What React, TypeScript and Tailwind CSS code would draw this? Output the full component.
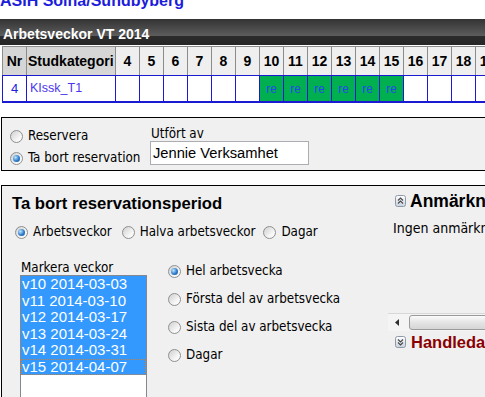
import React from "react";

const weeks = [4, 5, 6, 7, 8, 9, 10, 11, 12, 13, 14, 15, 16, 17, 18, 19, 20];
const booked = new Set([10, 11, 12, 13, 14, 15]);
const listRows = [
  "v10 2014-03-03",
  "v11 2014-03-10",
  "v12 2014-03-17",
  "v13 2014-03-24",
  "v14 2014-03-31",
  "v15 2014-04-07",
];

function Radio({ checked }: { checked?: boolean }) {
  return (
    <span className="flex h-[13px] w-[13px] shrink-0 items-center justify-center rounded-full border border-[#8e8f8f] bg-[linear-gradient(135deg,#cfcfcf,#f8f8f8_70%)]">
      {checked && (
        <span className="h-[7px] w-[7px] rounded-full bg-[radial-gradient(circle_at_35%_35%,#bfe6ff,#2d7ccc_55%,#0e4687)]" />
      )}
    </span>
  );
}

function ChevIcon({ up }: { up?: boolean }) {
  return (
    <svg width="11" height="12" viewBox="0 0 11 12" className="shrink-0">
      <defs>
        <linearGradient id={up ? "gu" : "gd"} x1="0" y1="0" x2="0" y2="1">
          <stop offset="0" stopColor="#ffffff" />
          <stop offset="1" stopColor="#c9d2de" />
        </linearGradient>
      </defs>
      <rect x="0.5" y="0.5" width="10" height="11" rx="2" fill={`url(#${up ? "gu" : "gd"})`} stroke="#8d99a8" />
      {up ? (
        <path d="M3 5.5 L5.5 3 L8 5.5 M3 8.5 L5.5 6 L8 8.5" fill="none" stroke="#4a4a4a" strokeWidth="1.2" />
      ) : (
        <path d="M3 3.5 L5.5 6 L8 3.5 M3 6.5 L5.5 9 L8 6.5" fill="none" stroke="#4a4a4a" strokeWidth="1.2" />
      )}
    </svg>
  );
}

export default function App() {
  return (
    <div className="relative h-[397px] w-[485px] overflow-hidden bg-white font-['DejaVu_Sans_Condensed','Liberation_Sans',sans-serif] text-[13.3px] text-black">
      {/* site title */}
      <div className="flex h-[19px] flex-col">
        <div className="-mt-[8px] whitespace-nowrap font-['Liberation_Sans',sans-serif] text-[16px] font-bold leading-[18px] text-[#1c1cdc]">
          ASIH Solna/Sundbyberg
        </div>
      </div>

      {/* dark bar */}
      <div className="h-[26px] w-[520px] bg-[linear-gradient(#333333,#5c5c5c_64%,#2c2c2c_66%,#262626)] pl-[3px] pt-[7px]">
        <div className="whitespace-nowrap font-['Liberation_Sans',sans-serif] text-[14px] font-bold leading-[16px] text-white">
          Arbetsveckor VT 2014
        </div>
      </div>
      <div className="h-px" />

      {/* table */}
      <div className="ml-[2px] w-[520px]">
        <div className="flex gap-px bg-[#8c8c8c] pl-px pt-px font-['Liberation_Sans',sans-serif] text-[14px] font-bold">
          <div className="flex h-[28px] w-[23px] shrink-0 items-center justify-center bg-[#d6d6d6]">Nr</div>
          <div className="flex h-[28px] w-[88px] shrink-0 items-center bg-[#d6d6d6] pl-px">Studkategori</div>
          {weeks.map((w) => (
            <div key={w} className="flex h-[28px] w-[23px] shrink-0 items-center justify-center bg-[#efefef]">
              {w}
            </div>
          ))}
        </div>
        <div className="flex gap-px bg-[#1a1ad0] pb-[2px] pl-px pt-px font-['Liberation_Sans',sans-serif] text-[13px]">
          <div className="flex h-[25px] w-[23px] shrink-0 items-center justify-center bg-white text-[#2020e0]">4</div>
          <div className="flex h-[25px] w-[88px] shrink-0 items-center bg-white pl-[3px] text-[12.5px] text-[#4a36ee]">KIssk_T1</div>
          {weeks.map((w) => (
            <div
              key={w}
              className={
                booked.has(w)
                  ? "flex h-[25px] w-[23px] shrink-0 items-center justify-center bg-[#00b050] text-[12px] text-[#2548e8]"
                  : "h-[25px] w-[23px] shrink-0 bg-white"
              }
            >
              {booked.has(w) ? "re" : ""}
            </div>
          ))}
        </div>
      </div>

      {/* panel 1 */}
      <div className="ml-px mt-[14px] flex h-[54px] w-[520px] border border-black bg-[#f0f0f0]">
        <div className="flex w-[148px] shrink-0 flex-col pl-[8px] pt-[7px]">
          <label className="flex h-[22px] items-center gap-[5px] whitespace-nowrap">
            <Radio />
            <span>Reservera</span>
          </label>
          <label className="flex h-[22px] items-center gap-[5px] whitespace-nowrap">
            <Radio checked />
            <span>Ta bort reservation</span>
          </label>
        </div>
        <div className="flex flex-col pt-[9px]">
          <div className="h-[14px] pl-px leading-[14px]">Utfört av</div>
          <div className="flex h-[24px] w-[159px] items-center border border-[#abadb3] bg-white pl-[2px] font-['Liberation_Sans',sans-serif] text-[14.7px]">
            Jennie Verksamhet
          </div>
        </div>
      </div>

      {/* panel 2 */}
      <div className="ml-px mt-[14px] flex h-[300px] w-[520px] border border-black bg-[#f0f0f0]">
        <div className="flex w-[386px] shrink-0 flex-col">
          <div className="whitespace-nowrap pl-[10px] pt-[8px] font-['Liberation_Sans',sans-serif] text-[16.7px] font-bold leading-[20px]">
            Ta bort reservationsperiod
          </div>
          <div className="mt-[8px] flex h-[20px] items-center whitespace-nowrap pl-[13px]">
            <label className="flex items-center gap-[5px]">
              <Radio checked />
              <span>Arbetsveckor</span>
            </label>
            <label className="ml-[10px] flex items-center gap-[5px]">
              <Radio />
              <span>Halva arbetsveckor</span>
            </label>
            <label className="ml-[8px] flex items-center gap-[5px]">
              <Radio />
              <span>Dagar</span>
            </label>
          </div>
          <div className="mt-[15px] flex">
            <div className="ml-[18px] flex flex-col pt-[3px]">
              <div className="h-[15px] whitespace-nowrap pl-px leading-[15px]">Markera veckor</div>
              <div className="h-[140px] w-[127px] border border-[#828790] bg-white font-['Liberation_Sans',sans-serif] text-[15px]">
                {listRows.map((r, i) => (
                  <div
                    key={r}
                    className={
                      i === listRows.length - 1
                        ? "h-[16.5px] whitespace-nowrap bg-[#3399ff] pl-px leading-[16.5px] text-white outline-1 -outline-offset-1 outline-dotted outline-[#c8803a]"
                        : "h-[16.5px] whitespace-nowrap bg-[#3399ff] pl-px leading-[16.5px] text-white"
                    }
                  >
                    {r}
                  </div>
                ))}
              </div>
            </div>
            <div className="ml-[21px] flex flex-col whitespace-nowrap">
              {["Hel arbetsvecka", "Första del av arbetsvecka", "Sista del av arbetsvecka", "Dagar"].map((t, i) => (
                <label key={t} className="flex h-[28px] items-center gap-[5px]">
                  <Radio checked={i === 0} />
                  <span>{t}</span>
                </label>
              ))}
            </div>
          </div>
        </div>

        <div className="flex flex-1 flex-col">
          <div className="mt-[6px] flex h-[18px] items-center gap-[4px] whitespace-nowrap pl-[7px] font-['Liberation_Sans',sans-serif] text-[17.5px] font-bold">
            <ChevIcon up />
            <span>Anmärkningar</span>
          </div>
          <div className="mt-[9px] flex h-[18px] items-center whitespace-nowrap pl-[5px] text-[14px]">Ingen anmärkningar</div>
          <div className="mt-[76px] flex h-[18px] border-t border-[#d8d8d8] bg-[#f4f4f4]">
            <div className="flex w-[17px] items-center justify-center">
              <svg width="4" height="7" viewBox="0 0 4 7">
                <path d="M4 0 L0 3.5 L4 7 Z" fill="#303030" />
              </svg>
            </div>
            <div className="ml-[4px] mt-px h-[15px] flex-1 rounded-[3px] border border-[#9a9a9a] bg-[linear-gradient(#fbfbfb,#e4e4e4_50%,#d6d6d6)]" />
          </div>
          <div className="mt-[2px] flex h-[18px] items-center gap-[5px] whitespace-nowrap pl-[7px] font-['Liberation_Sans',sans-serif] text-[16.5px] font-bold text-[#8b0000]">
            <ChevIcon />
            <span>Handledarkommentar</span>
          </div>
        </div>
      </div>
    </div>
  );
}
